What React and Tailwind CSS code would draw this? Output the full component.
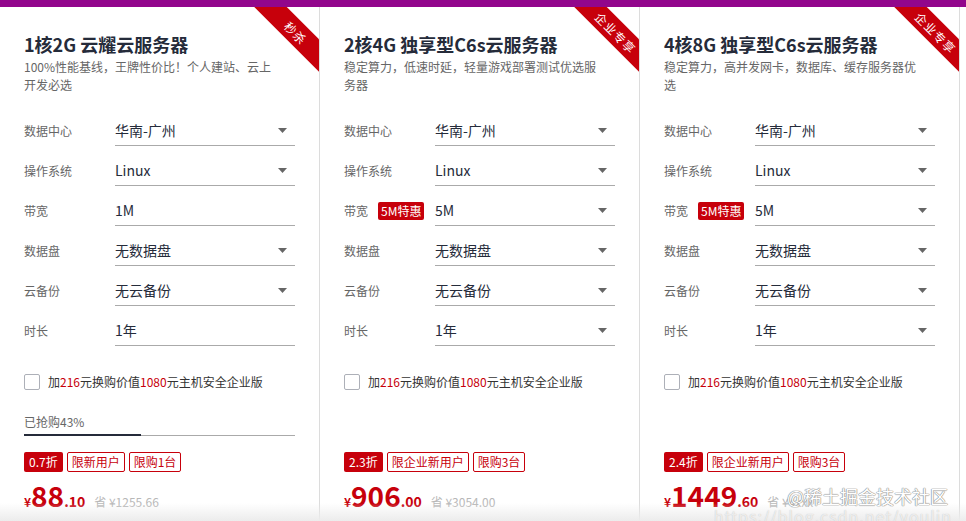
import React from "react";

const cards = [
  {
    title: "1核2G 云耀云服务器",
    desc: "100%性能基线，王牌性价比！个人建站、云上开发必选",
    ribbon: "秒杀",
    bandwidth: "1M",
    bandwidthTag: null,
    bandwidthArrow: false,
    progress: 43,
    discount: "0.7折",
    tags: ["限新用户", "限购1台"],
    price: "88",
    cents: ".10",
    save: "¥1255.66",
  },
  {
    title: "2核4G 独享型C6s云服务器",
    desc: "稳定算力，低速时延，轻量游戏部署测试优选服务器",
    ribbon: "企业专享",
    bandwidth: "5M",
    bandwidthTag: "5M特惠",
    bandwidthArrow: true,
    progress: null,
    discount: "2.3折",
    tags: ["限企业新用户", "限购3台"],
    price: "906",
    cents: ".00",
    save: "¥3054.00",
  },
  {
    title: "4核8G 独享型C6s云服务器",
    desc: "稳定算力，高并发网卡，数据库、缓存服务器优选",
    ribbon: "企业专享",
    bandwidth: "5M",
    bandwidthTag: "5M特惠",
    bandwidthArrow: true,
    progress: null,
    discount: "2.4折",
    tags: ["限企业新用户", "限购3台"],
    price: "1449",
    cents: ".60",
    save: "¥4xxx",
  },
];

function Arrow() {
  return (
    <svg width="9" height="5" viewBox="0 0 9 5" className="shrink-0">
      <path d="M0 0h9L4.5 5z" fill="#666" />
    </svg>
  );
}

function Row({ label, value, arrow = true, tag }) {
  return (
    <div className="flex items-center h-[31px]">
      <div className="w-[91px] shrink-0 flex items-center text-[12px] text-[#666]">
        <span>{label}</span>
        {tag && (
          <span className="ml-[10px] h-[18px] px-[3px] rounded-[2px] bg-[#c7000b] text-white text-[12px] leading-[18px]">
            {tag}
          </span>
        )}
      </div>
      <div className="flex-1 h-full flex items-center justify-between border-b border-[#aaa] pr-[8px] text-[14px] text-[#252b3a]">
        <span>{value}</span>
        {arrow && <Arrow />}
      </div>
    </div>
  );
}

function Card({ c, last }) {
  return (
    <div className={"relative w-[320px] shrink-0 overflow-hidden bg-white border-r border-[#dcdcdc] px-[24px] pt-[25px] " + (last ? "" : "")}>
      <div className="absolute left-[246px] top-[14px] w-[100px] h-[23px] rotate-45 bg-[#c7000b] text-white text-[12px] leading-[23px] text-center tracking-[1px]">
        {c.ribbon}
      </div>
      <div className="text-[18px] leading-[24px] font-bold text-[#252b3a]">{c.title}</div>
      <div className="mt-[2px] w-[256px] text-[12px] leading-[18px] text-[#666]">{c.desc}</div>

      <div className="mt-[21px] flex flex-col gap-[9px]">
        <Row label="数据中心" value="华南-广州" />
        <Row label="操作系统" value="Linux" />
        <Row label="带宽" value={c.bandwidth} arrow={c.bandwidthArrow} tag={c.bandwidthTag} />
        <Row label="数据盘" value="无数据盘" />
        <Row label="云备份" value="无云备份" />
        <Row label="时长" value="1年" arrow={c.bandwidthArrow} />
      </div>

      <div className="mt-[28px] flex items-center h-[16px]">
        <div className="w-[16px] h-[16px] border border-[#adb0b8] rounded-[2px] bg-white" />
        <div className="ml-[8px] text-[12px] text-[#333]">
          加<span className="text-[#c7000b]">216</span>元换购价值<span className="text-[#c7000b]">1080</span>元主机安全企业版
        </div>
      </div>

      <div className={"mt-[23px] " + (c.progress ? "" : "invisible")}>
        <div className="text-[12px] leading-[18px] text-[#666]">已抢购43%</div>
        <div className="mt-[3px] flex items-end h-[2px]">
          <div className="w-[117px] h-[2px] bg-[#252b3a]" />
          <div className="flex-1 h-px bg-[#aaa]" />
        </div>
      </div>

      <div className="mt-[16px] flex items-center gap-[4px] h-[20px]">
        <span className="h-[20px] px-[5px] rounded-[2px] bg-[#c7000b] text-white text-[12px] leading-[20px]">
          {c.discount}
        </span>
        {c.tags.map((t) => (
          <span
            key={t}
            className="h-[20px] px-[4px] rounded-[2px] border border-[#c7000b] text-[#c7000b] text-[12px] leading-[18px]"
          >
            {t}
          </span>
        ))}
      </div>

      <div className="mt-[6px] flex items-baseline text-[#c7000b] font-bold">
        <span className="text-[12px]">¥</span>
        <span className="text-[28px] leading-[34px]">{c.price}</span>
        <span className="text-[14px]">{c.cents}</span>
        <span className="ml-[9px] text-[12px] font-normal text-[#b8b8b8]">省 {c.save}</span>
      </div>
    </div>
  );
}

export default function App() {
  return (
    <div
      className="relative w-[966px] h-[521px] overflow-hidden bg-white flex flex-col"
      style={{ fontFamily: '"Noto Sans CJK SC", "Noto Sans", sans-serif' }}
    >
      <div className="h-[7px] shrink-0 bg-[#92068c]" />
      <div className="flex flex-1">
        {cards.map((c, i) => (
          <Card key={i} c={c} last={i === 2} />
        ))}
      </div>
      <div className="absolute left-0 right-0 bottom-0 h-[18px] bg-gradient-to-b from-white/0 to-[#ececec]" />
      <div
        className="absolute right-[18px] bottom-[14px] text-[18px] leading-[22px] text-white"
        style={{ textShadow: "0 0 1px #888, 0 0 1px #888, 0 0 1px #888" }}
      >
        @稀土掘金技术社区
      </div>
      <div className="absolute right-[14px] bottom-[-4px] text-[16px] leading-[18px] text-white/70 tracking-[1px]"
        style={{ textShadow: "0 0 1px #bbb" }}>
        https://blog.csdn.net/youlin
      </div>
    </div>
  );
}
